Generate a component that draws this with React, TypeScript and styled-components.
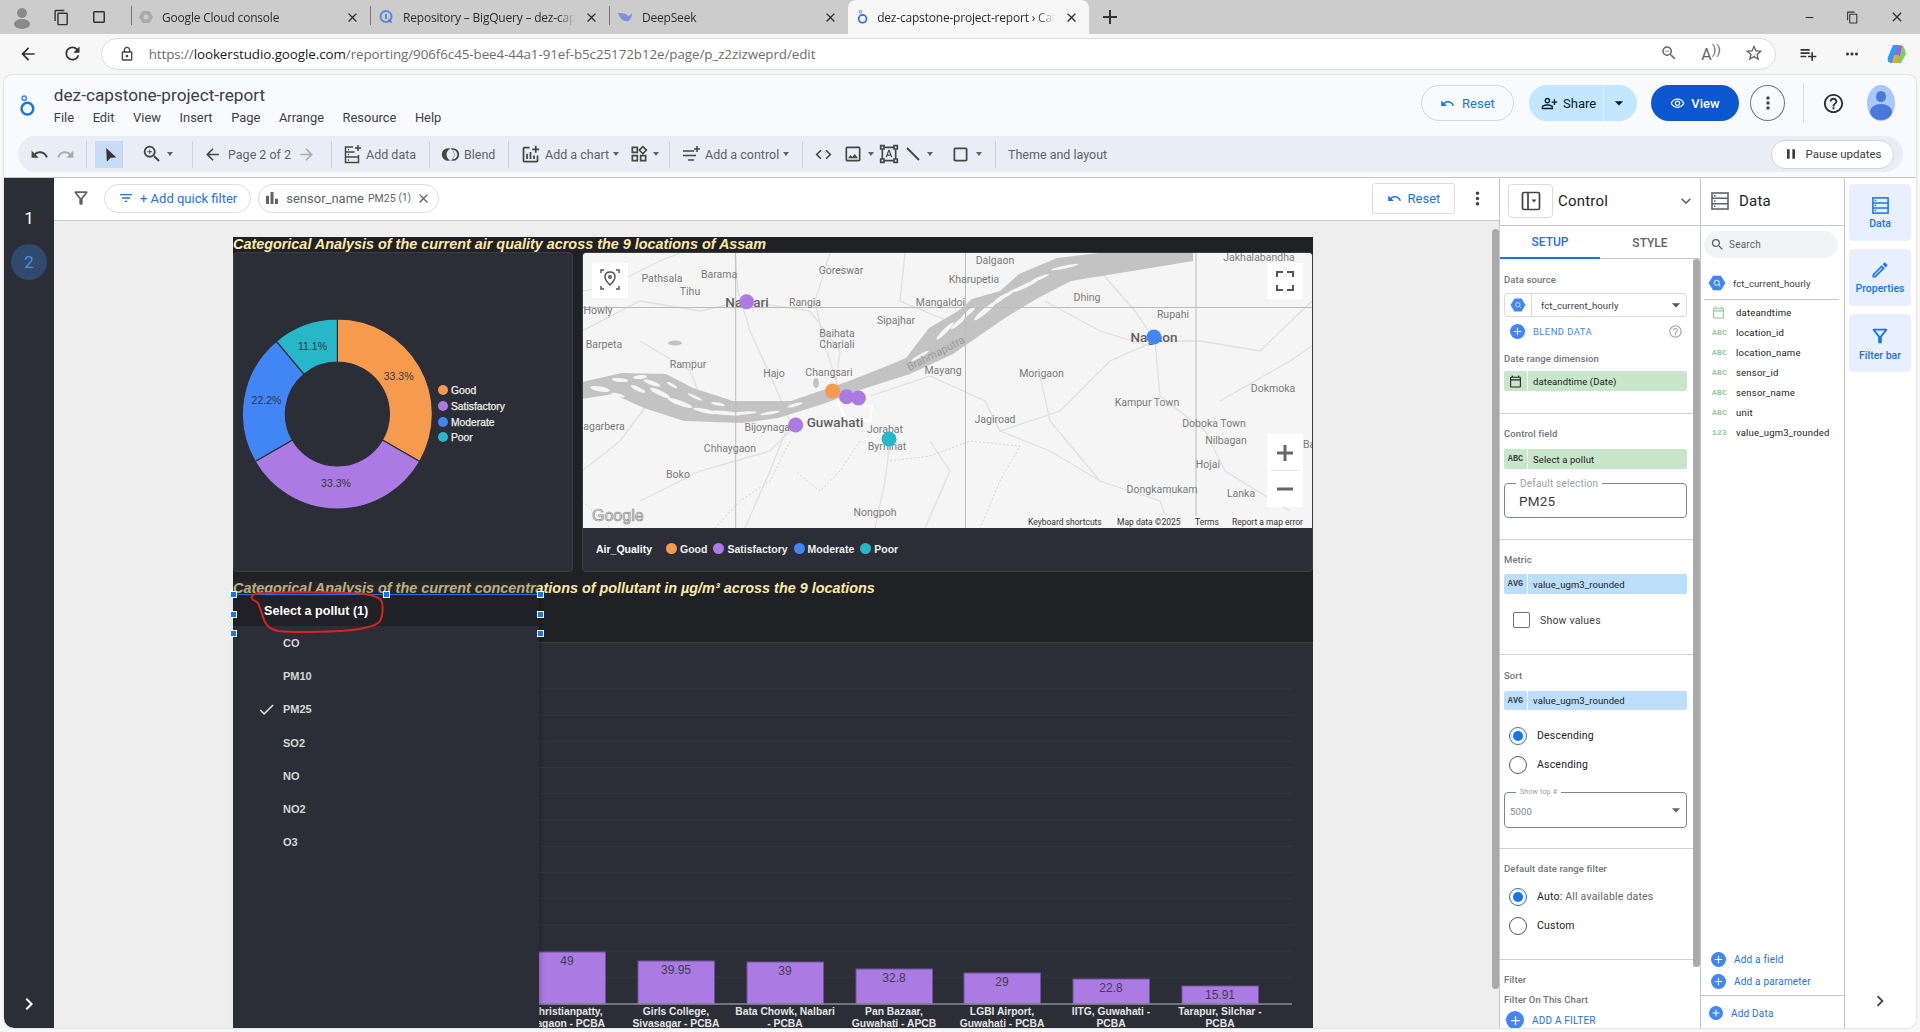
import React from "react";
import styled, { createGlobalStyle } from "styled-components";
import {
  MdUndo, MdRedo, MdNavigation, MdArrowBack, MdArrowForward, MdOutlineAddchart, MdCode, MdOutlineImage,
  MdMoreVert, MdHelpOutline, MdArrowDropDown, MdExpandMore, MdChevronRight, MdClose, MdCheck, MdSearch,
  MdOutlineEdit, MdPause, MdBarChart, MdOutlineFilterAlt, MdFilterList, MdOutlineVisibility, MdOutlinePersonAddAlt,
  MdAdd, MdRemove, MdOutlineCalendarToday, MdOutlineRefresh, MdOutlineZoomIn, MdOutlineHelpOutline,
  MdOutlineFormatShapes, MdOutlineWidgets, MdOutlineCropSquare, MdOutlineStarBorder, MdMoreHoriz, MdOutlineZoomOut,
  MdOutlineLock, MdOutlinePlaylistAdd, MdOutlineContentCopy,
} from "react-icons/md";

const Global = createGlobalStyle`
  html, body { margin: 0; padding: 0; width: 1920px; height: 1032px; overflow: hidden; background: #f7f7f7; }
  * { box-sizing: border-box; }
  body { font-family: Roboto, "Liberation Sans", sans-serif; }
`;

const Page = styled.div`
  width: 1920px; height: 1032px; display: flex; flex-direction: column; overflow: hidden; background: #f7f7f7;
`;

/* Browser chrome */
const TabStrip = styled.div`
  height: 34px; background: #cccccc; display: flex; align-items: stretch; flex: none;
`;
const StripTools = styled.div`
  width: 131px; display: flex; align-items: center; padding-left: 11px; gap: 20px; color: #333;
`;
const BrowserTab = styled.div<{ $active?: boolean }>`
  width: ${(p) => (p.$active ? 241 : 239)}px; display: flex; align-items: center; gap: 9px; padding: 0 10px 0 ${(p) => (p.$active ? 9 : 8)}px;
  font: 12px "Open Sans", Roboto, sans-serif; color: #2c2c2c; position: relative;
  background: ${(p) => (p.$active ? "#f7f7f7" : "transparent")};
  border-radius: ${(p) => (p.$active ? "8px 8px 0 0" : 0)};
  &::before { content: ""; display: ${(p) => (p.$active ? "none" : "block")}; position: absolute; left: 0; top: 6px; bottom: 9px; width: 1px; background: #777; }
`;
const TabTitle = styled.span`
  flex: 1; white-space: nowrap; overflow: hidden; letter-spacing: -0.2px;
  mask-image: linear-gradient(to right, #000 90%, transparent);
`;
const NewTab = styled.div`
  width: 40px; display: flex; align-items: center; justify-content: center; color: #333; margin-left: 1px;
`;
const WindowControls = styled.div`
  margin-left: auto; display: flex; align-items: center; gap: 30px; padding-right: 15px; color: #333;
`;
const AddressRow = styled.div`
  height: 39px; flex: none; background: #f7f7f7; display: flex; align-items: center; padding: 0 12px 0 18px; color: #333;
`;
const NavIcons = styled.div`
  display: flex; gap: 24px; width: 83px; align-items: center;
`;
const UrlBox = styled.div`
  width: 1683px; height: 32px; background: #fff; border: 1px solid #dcdcdc; border-radius: 16px; display: flex; align-items: center; padding: 0 11px 0 17px;
`;
const UrlText = styled.div`
  font: 13.4px "Open Sans", Roboto, sans-serif; color: #6d6d6d; margin-left: 14px; flex: 1; white-space: nowrap; letter-spacing: -0.08px;
  b { font-weight: 400; color: #1a1a1a; }
`;
const UrlIcons = styled.div`
  display: flex; gap: 23px; color: #666; align-items: center;
`;
const BrowserRight = styled.div`
  display: flex; align-items: center; gap: 25px; margin-left: 22px; color: #333;
`;

/* App header */
const AppShell = styled.div`
  flex: 1; min-height: 0; margin: 2px 4px 4px 4px; background: #f8fafd; border-radius: 8px 8px 10px 10px; display: flex; flex-direction: column; overflow: hidden;
  box-shadow: 0 0 2px rgba(0,0,0,.25);
`;
const Header = styled.div`
  height: 61px; flex: none; display: flex; align-items: center; padding: 0 0 0 15px;
`;
const TitleBlock = styled.div`
  margin-left: 18px; display: flex; flex-direction: column; gap: 3px; margin-top: -1px;
`;
const ReportTitle = styled.div`
  font-size: 17.2px; color: #3c4043; line-height: 22px;
`;
const MenuBar = styled.div`
  display: flex; gap: 18.6px; font-size: 12.9px; color: #3c4043; line-height: 18px;
`;
const HeaderActions = styled.div`
  margin-left: auto; display: flex; align-items: center; padding: 0 21px 5px 0;
`;
const PillButton = styled.div<{ $kind?: "outline" | "tonal" | "solid" }>`
  height: 36px; border-radius: 18px; display: flex; align-items: center; gap: 7px; font-size: 13px; font-weight: 500;
  background: ${(p) => (p.$kind === "tonal" ? "#c2e7ff" : p.$kind === "solid" ? "#0b57d0" : "transparent")};
  color: ${(p) => (p.$kind === "tonal" ? "#001d35" : p.$kind === "solid" ? "#fff" : "#1a73e8")};
  border: ${(p) => (p.$kind === "outline" ? "1px solid #d5d8dc" : "none")};
`;
const ResetPill = styled(PillButton)`
  width: 93px; justify-content: center; margin-right: 15px; font-weight: 400;
`;
const SharePill = styled(PillButton)`
  width: 108px; padding-left: 12px; margin-right: 14px; font-weight: 400; gap: 5px;
`;
const ShareDivider = styled.span`
  margin-left: 2px; width: 1px; height: 36px; background: #e2f3ff; display: block;
`;
const ViewPill = styled(PillButton)`
  width: 88px; justify-content: center; margin-right: 11px; gap: 6px;
`;
const RoundMore = styled.div`
  width: 35px; height: 36px; border-radius: 50%; border: 1px solid #777; display: flex; align-items: center; justify-content: center; color: #444;
`;
const VDivider = styled.div`
  width: 1px; height: 40px; background: #dadce0; margin: 0 18px 0 18px;
`;
const Avatar = styled.div`
  width: 28px; height: 36px; border-radius: 50%; background: #a8c7fa; margin-left: 22px; position: relative; overflow: hidden;
  &::before { content: ""; position: absolute; left: 9px; top: 6px; width: 10px; height: 11px; border-radius: 50%; background: #4a78d8; }
  &::after { content: ""; position: absolute; left: 3px; top: 19px; width: 22px; height: 16px; border-radius: 50%; background: #4a78d8; }
`;

/* Toolbar */
const Toolbar = styled.div`
  height: 36px; flex: none; margin: 0 13px 5px 14px; background: #e9eef6; border-radius: 18px; display: flex; align-items: center; padding-left: 8px; color: #444746;
  font-size: 12.5px;
`;
const ToolGroup = styled.div<{ $w: number; $gap?: number; $pl?: number; $bl?: boolean }>`
  width: ${(p) => p.$w}px; height: 27px; display: flex; align-items: center; flex: none; gap: ${(p) => p.$gap ?? 3}px; padding-left: ${(p) => p.$pl ?? 11}px;
  border-right: 1px solid #cfd4dc; border-left: ${(p) => (p.$bl ? "1px solid #cfd4dc" : "none")};
`;
const SelectTool = styled.div`
  width: 27px; height: 27px; background: #c9dcf7; display: flex; align-items: center; justify-content: center; color: #333; margin-left: 8px;
  svg { transform: rotate(-25deg); }
`;
const ToolLabel = styled.span`
  white-space: nowrap; color: #5f6368;
`;
const ToolGap = styled.span<{ $w: number }>`
  width: ${(p) => p.$w}px; flex: none;
`;
const ThemeLabel = styled(ToolLabel)`
  margin-left: 12px;
`;
const Caret = styled.span`
  display: inline-block; width: 0; height: 0; border-left: 3.5px solid transparent; border-right: 3.5px solid transparent; border-top: 4px solid #5f6368;
`;
const PauseBtn = styled.div`
  margin-left: auto; margin-right: 9px; width: 123px; height: 29px; background: #fff; border-radius: 15px; border: 1px solid #d0d4d9; display: flex; align-items: center; justify-content: center; gap: 6px; font-size: 11.5px; color: #3c4043;
`;

/* Body */
const Body = styled.div`
  flex: 1; min-height: 0; display: flex; border-top: 1px solid #c4c7c5; background: #fff;
`;
const PageRail = styled.div`
  width: 50px; flex: none; background: #2b2e36; display: flex; flex-direction: column; align-items: center; padding-top: 22px; color: #fff; font-size: 17px; gap: 8px;
`;
const PageNum = styled.div<{ $active?: boolean }>`
  width: 36px; height: 36px; border-radius: 50%; display: flex; align-items: center; justify-content: center;
  background: ${(p) => (p.$active ? "#2f4a6d" : "transparent")}; color: ${(p) => (p.$active ? "#4a90e2" : "#fff")};
`;
const RailExpand = styled.div`
  margin-top: auto; margin-bottom: 12px; color: #fff; display: flex;
`;
const Main = styled.div`
  width: 1445px; flex: none; display: flex; flex-direction: column; min-width: 0;
`;
const FilterBar = styled.div`
  height: 43px; flex: none; background: #fff; border-bottom: 1px solid #c4c7c5; display: flex; align-items: center; padding: 0 11px 2px 17px; color: #5f6368;
`;
const FilterPill = styled.div`
  height: 29px; border: 1px solid #dadce0; border-radius: 15px; display: flex; align-items: center; font-size: 13px; color: #1a73e8; gap: 6px; margin-left: 13px; padding: 0 13px;
`;
const SensorPill = styled(FilterPill)`
  margin-left: 7px; color: #5f6368; padding: 0 7px 0 4px; gap: 5px;
  small { font-size: 10.5px; margin-left: -1px; }
  sup { font-size: 10px; margin-left: -2px; vertical-align: 2px; line-height: 0; }
`;
const ResetSquare = styled.div`
  margin-left: auto; width: 83px; height: 31px; border: 1px solid #dadce0; border-radius: 3px; display: flex; align-items: center; justify-content: center; gap: 6px; font-size: 13px; color: #1a73e8; margin-right: 12px;
`;
const Canvas = styled.div`
  flex: 1; min-height: 0; background: #eeeeee; padding: 16px 0 0 179px; position: relative; overflow: hidden;
`;
const CanvasScroll = styled.div`
  position: absolute; right: 0; top: 8px; width: 7px; height: 760px; background: #aaa; border-radius: 4px;
`;
const Report = styled.div`
  width: 1080px; background: #202124; position: relative;
`;
const ReportHeading = styled.div<{ $tall?: boolean }>`
  font: italic bold 14.4px "Liberation Sans", Arial, sans-serif; color: #ffe9a8; line-height: ${(p) => (p.$tall ? "14px" : "15px")};
  white-space: nowrap; padding-top: ${(p) => (p.$tall ? "9px" : "0")};
  height: ${(p) => (p.$tall ? "70px" : "15px")};
`;
const TopRow = styled.div`
  display: flex; gap: 9px; height: 320px;
`;
const DarkCard = styled.div`
  background: #2b2e36; border: 1px solid #3a3d45; border-radius: 4px; overflow: hidden;
`;
const PieCard = styled(DarkCard)`
  width: 340px; flex: none;
`;
const MapCard = styled(DarkCard)`
  flex: 1; display: flex; flex-direction: column;
`;
const MapLegend = styled.div`
  flex: 1; display: flex; align-items: center; padding: 0 0 2px 13px; font: bold 10.5px "Liberation Sans", Arial, sans-serif; color: #eee;
`;
const LegendKey = styled.span`
  margin-right: 14px; color: #fff;
`;
const LegendItem = styled.span`
  display: flex; align-items: center; gap: 3px; margin-right: 6px;
`;
const LegendDot = styled.i<{ $c: string }>`
  width: 11px; height: 11px; border-radius: 50%; background: ${(p) => p.$c}; display: block;
`;
const ChartCard = styled.div`
  height: 386px; background: #2b2e36; border-top: 1px solid #3a3d45;
`;
const FullSvg = styled.svg`
  display: block; width: 100%;
`;
const Scrim = styled.div`
  position: absolute; left: 0; top: 344px; width: 306px; height: 13px; background: rgba(50, 50, 50, .32);
`;
const Dropdown = styled.div`
  position: absolute; left: 0; top: 357px; width: 306px; height: 434px; background: #2b2e36; box-shadow: 2px 0 4px rgba(0,0,0,.2); z-index: 2;
`;
const DropHead = styled.div`
  height: 32px; background: #1f2126; border-top: 1px solid #1a73e8; display: flex; align-items: center; padding-left: 31px;
  font: bold 12.6px "Liberation Sans", Arial, sans-serif; color: #fff;
`;
const DropItem = styled.div`
  height: 33.3px; padding-left: 50px; display: flex; align-items: center; position: relative; font: bold 11px "Liberation Sans", Arial, sans-serif; color: #d6d6d6;
  svg { position: absolute; left: 24px; top: 7px; color: #ddd; }
`;
const Handle = styled.span<{ $x: number; $y: number }>`
  position: absolute; left: ${(p) => p.$x - 3}px; top: ${(p) => p.$y - 3}px; width: 7px; height: 7px; background: #1a73e8; border: 1px solid #fff; z-index: 3;
`;
const RedMark = styled.svg`
  position: absolute; left: 14px; top: 354px; z-index: 4; overflow: visible;
`;

/* Panels */
const ControlPanel = styled.div`
  width: 201px; flex: none; border-left: 1px solid #c4c7c5; display: flex; flex-direction: column; background: #fff; min-height: 0;
`;
const DataPanel = styled.div`
  width: 144px; flex: none; border-left: 1px solid #c4c7c5; display: flex; flex-direction: column; background: #fff; min-height: 0;
`;
const PanelHead = styled.div`
  height: 48px; flex: none; border-bottom: 1px solid #c4c7c5; display: flex; align-items: center; font-size: 15px; color: #1f1f1f; letter-spacing: .2px; padding-bottom: 1px;
`;
const ToggleBox = styled.div`
  width: 45px; height: 34px; border: 1px solid #dadce0; border-radius: 4px; margin: 0 5px 0 8px; display: flex; align-items: center; justify-content: center; color: #444;
`;
const PanelChevron = styled.span`
  margin-left: auto; margin-right: 4px; display: flex; color: #666;
`;
const DataHeadIcon = styled.span`
  margin: 0 9px 0 9px; display: flex;
`;
const Tabs = styled.div`
  height: 33px; flex: none; display: flex; border-bottom: 1px solid #c4c7c5; font-size: 12px; font-weight: 500;
`;
const PanelTab = styled.div<{ $on?: boolean }>`
  flex: 1; display: flex; align-items: center; justify-content: center; color: ${(p) => (p.$on ? "#1a73e8" : "#5f6368")};
  border-bottom: ${(p) => (p.$on ? "2px solid #1a73e8" : "none")}; margin-bottom: -1px;
`;
const SettingsScroll = styled.div`
  flex: 1; min-height: 0; position: relative; overflow: hidden; padding-right: 7px;
  &::after { content: ""; position: absolute; right: 0; top: 0; width: 7px; height: 708px; background: #aaa; border-radius: 3px; }
`;
const Section = styled.div<{ $pb: number; $pt?: number; $last?: boolean }>`
  padding: ${(p) => p.$pt ?? 14}px 6px ${(p) => p.$pb}px 4px; border-bottom: ${(p) => (p.$last ? "none" : "1px solid #d0d2d4")};
`;
const FieldLabel = styled.div<{ $mt?: number; $mb?: number }>`
  font-size: 9.5px; font-weight: 500; color: #70757a; line-height: 12px; margin: ${(p) => p.$mt ?? 0}px 0 ${(p) => p.$mb ?? 9}px 0; letter-spacing: .1px;
`;
const SourceSelect = styled.div`
  height: 24px; border: 1px solid #dadce0; border-radius: 3px; display: flex; align-items: center; font-size: 9.5px; color: #3c4043;
`;
const SourceName = styled.span`
  flex: 1; padding-left: 9px; letter-spacing: .1px;
`;
const HexCell = styled.div`
  width: 27px; height: 22px; border-right: 1px solid #dadce0; display: flex; align-items: center; justify-content: center;
`;
const BlendRow = styled.div`
  height: 20px; margin-top: 4px; display: flex; align-items: center; padding-left: 6px; gap: 8px; font-size: 9.5px; color: #4285f4; letter-spacing: .4px;
  > svg { margin-left: auto; margin-right: 4px; color: #aaa; }
`;
const Chip = styled.div<{ $c: string; $h?: number }>`
  height: ${(p) => p.$h ?? 20}px; display: flex; gap: 1px; font-size: 9.5px; color: #202124; letter-spacing: .1px;
  > * { background: ${(p) => p.$c}; display: flex; align-items: center; }
  > *:first-child { width: 23px; justify-content: center; border-radius: 2px 0 0 2px; }
  > *:last-child { flex: 1; padding-left: 5px; border-radius: 0 2px 2px 0; }
`;
const TypeTag = styled.span<{ $green?: boolean }>`
  font: bold ${(p) => (p.$green ? 8 : 8.5)}px "Liberation Mono", monospace; color: ${(p) => (p.$green ? "#93c9a0" : "#3c4043")};
`;
const Outlined = styled.div<{ $h: number; $mt: number }>`
  margin-top: ${(p) => p.$mt}px; height: ${(p) => p.$h}px; border: 1px solid #80868b; border-radius: 4px; position: relative; display: flex; align-items: center;
`;
const OutlinedLegend = styled.span<{ $small?: boolean }>`
  position: absolute; left: 11px; top: ${(p) => (p.$small ? -5 : -6)}px; background: #fff; padding: 0 4px; font-size: ${(p) => (p.$small ? 7 : 10)}px; color: #9aa0a6; line-height: ${(p) => (p.$small ? 9 : 11)}px; letter-spacing: .2px;
`;
const OutlinedValue = styled.span<{ $small?: boolean }>`
  font-size: ${(p) => (p.$small ? 9.5 : 13.5)}px; color: ${(p) => (p.$small ? "#80868b" : "#3c4043")}; padding-left: ${(p) => (p.$small ? 5 : 14)}px; padding-top: ${(p) => (p.$small ? 2 : 0)}px; flex: 1; letter-spacing: .2px;
`;
const CheckRow = styled.div`
  height: 24px; margin-top: 14px; display: flex; align-items: center; gap: 10px; padding-left: 9px; font-size: 10.5px; color: #3c4043; letter-spacing: .2px;
  i { width: 17px; height: 16px; border: 1px solid #6f7378; border-radius: 2px; display: block; }
`;
const RadioRow = styled.div<{ $mt?: number }>`
  height: 29px; margin-top: ${(p) => p.$mt ?? 0}px; display: flex; align-items: center; gap: 10px; padding-left: 5px; font-size: 10.5px; color: #202124; letter-spacing: .2px;
  em { font-style: normal; color: #5f6368; }
`;
const RadioDot = styled.i<{ $on?: boolean }>`
  width: 18px; height: 18px; border-radius: 50%; display: block; border: 1px solid ${(p) => (p.$on ? "#1a73e8" : "#555")}; position: relative;
  &::after { content: ""; display: ${(p) => (p.$on ? "block" : "none")}; position: absolute; left: 3px; top: 3px; width: 10px; height: 10px; border-radius: 50%; background: #1a73e8; }
`;
const AddRow = styled.div`
  height: 22px; display: flex; align-items: center; gap: 8px; color: #1a73e8; font-size: 10px; padding-left: 2px; letter-spacing: .2px;
`;
const PlusDisc = styled.span<{ $s: number }>`
  width: ${(p) => p.$s}px; height: ${(p) => p.$s}px; border-radius: 50%; background: #4285f4; color: #fff; display: flex; align-items: center; justify-content: center; flex: none;
`;
const SearchPill = styled.div`
  margin: 5px 6px 0 3px; height: 27px; flex: none; background: #f1f3f4; border-radius: 14px; display: flex; align-items: center; gap: 4px; padding-left: 6px; color: #5f6368; font-size: 10px; letter-spacing: .2px;
`;
const SourceRow = styled.div`
  margin: 13px 5px 0 3px; height: 29px; flex: none; border-bottom: 1px solid #c4c7c5; display: flex; align-items: center; gap: 7px; padding: 0 0 4px 4px; font-size: 9.5px; color: #3c4043; letter-spacing: .1px;
`;
const FieldRow = styled.div<{ $mt?: number }>`
  height: 20px; flex: none; margin-top: ${(p) => p.$mt ?? 0}px; display: flex; align-items: center; padding-left: 11px; font-size: 9.5px; color: #202124; letter-spacing: .2px;
  > *:first-child { width: 24px; display: flex; }
`;
const DataFooter = styled.div`
  margin-top: auto; flex: none; display: flex; flex-direction: column;
`;
const FooterFields = styled.div`
  padding: 0 0 3px 8px; border-bottom: 1px solid #c4c7c5; display: flex; flex-direction: column;
`;
const FooterAdd = styled.div`
  padding: 6px 0 5px 6px; height: 32px;
`;
const SideRail = styled.div`
  flex: 1; border-left: 1px solid #c4c7c5; padding: 6px 5px 0 4px; display: flex; flex-direction: column; gap: 8px; background: #fff;
`;
const SideBtn = styled.div<{ $h: number }>`
  height: ${(p) => p.$h}px; background: #e8f0fe; border-radius: 4px; display: flex; flex-direction: column; align-items: center; justify-content: center; gap: 2px; color: #1a73e8; font-size: 10.5px; font-weight: 500;
`;
const SideChevron = styled.div`
  margin-top: auto; margin-bottom: 16px; display: flex; justify-content: center; color: #444; padding-right: 1px;
`;

const COLORS = { good: "#f69b4d", sat: "#ab7ae2", mod: "#4285f4", poor: "#27b7c9" };

const LookerLogo = ({ s = 20 }: { s?: number }) => (
  <svg width={s * 0.8} height={s * 1.1} viewBox="0 0 16 22" fill="none">
    <circle cx="5" cy="4" r="2" stroke="#4285f4" strokeWidth="1.4" />
    <circle cx="8" cy="14" r="5.6" stroke="#1a73e8" strokeWidth="2.4" />
  </svg>
);

const HexIcon = ({ s = 16 }: { s?: number }) => (
  <svg width={s} height={s} viewBox="0 0 16 16">
    <path d="M4.5 1.5h7L15.5 8l-4 6.5h-7L.5 8z" fill="#4285f4" />
    <circle cx="7.8" cy="7.8" r="2.2" fill="none" stroke="#cfe0fc" strokeWidth="1" />
    <path d="M9.3 9.3l1.6 1.6" stroke="#cfe0fc" />
  </svg>
);

const Copilot = () => (
  <svg width="22" height="22" viewBox="0 0 22 22">
    <path d="M7 2h7l-3 18H5C2 20 1 17 2 14z" fill="#2f9bf0" />
    <path d="M14 2c3 0 4 2 5 5l1 4-5 9H9l3-17z" fill="#7ccf5e" />
    <path d="M12 3h4l-2 10H9z" fill="#a55de0" />
    <path d="M6 20l2-8h5l-2 8z" fill="#f4a03c" />
  </svg>
);

const ResetIcon = ({ c = "#1a73e8" }: { c?: string }) => (
  <svg width="15" height="15" viewBox="0 0 24 24" fill={c}>
    <path d="M12.5 8c-2.65 0-5.05 1-6.9 2.6L2 7v9h9l-3.62-3.62c1.39-1.16 3.16-1.88 5.12-1.88 3.54 0 6.55 2.31 7.6 5.5l2.37-.78C21.08 11.03 17.15 8 12.5 8z" />
  </svg>
);

const BlendIcon = () => (
  <svg width="19" height="19" viewBox="0 0 24 24" fill="#444746">
    <path d="M9 4a8 8 0 100 16c1.100 0 2-.2 3-.6A8 8 0 0112 4.600 8 8 0 009 4z" />
    <path d="M15 4c-1 0-2 .2-3 .6a8 8 0 010 14.800c1 .4 1.900.6 3 .6a8 8 0 000-16zm0 14a6 6 0 01-.8 0 9.900 9.900 0 000-12 6 6 0 11.800 12z" />
  </svg>
);

const AddDataIcon = () => (
  <svg width="19" height="21" viewBox="0 0 19 21" fill="none" stroke="#444746" strokeWidth="1.5">
    <path d="M10 3H2.500v15.500h13V11" />
    <path d="M2.500 8h9M2.500 13h13" />
    <path d="M15 1v6M12 4h6" />
    <path d="M5 5.500h1M5 10.500h1M5 16h1" />
  </svg>
);

const ControlIcon = () => (
  <svg width="20" height="20" viewBox="0 0 20 20" fill="none" stroke="#444746" strokeWidth="1.5">
    <path d="M2 7h11M2 11.500h13M7 16h6" />
    <path d="M16 2v6M13 5h6" />
  </svg>
);

const PanelToggleIcon = () => (
  <svg width="20" height="20" viewBox="0 0 20 20" fill="none" stroke="#444" strokeWidth="1.700">
    <rect x="1.500" y="1.500" width="17" height="17" rx="1.500" />
    <path d="M7 1.500v17" />
    <path d="M10.500 8.500h5l-2.500 3z" fill="#444" stroke="none" />
  </svg>
);

const StorageIcon = ({ c = "#5f6368", s = 20 }: { c?: string; s?: number }) => (
  <svg width={s} height={s} viewBox="0 0 20 20" fill="none" stroke={c} strokeWidth="1.600">
    <rect x="2" y="2" width="16" height="16" />
    <path d="M2 7.300h16M2 12.700h16" />
    <path d="M4 4.700h1.500M4 10h1.500M4 15.300h1.500" />
  </svg>
);

const arc = (start: number, end: number, R: number, r: number, cx: number, cy: number) => {
  const pt = (a: number, rad: number) => [cx + rad * Math.sin(a), cy - rad * Math.cos(a)];
  const [x1, y1] = pt(start, R); const [x2, y2] = pt(end, R); const [x3, y3] = pt(end, r); const [x4, y4] = pt(start, r);
  const large = end - start > Math.PI ? 1 : 0;
  return `M${x1} ${y1}A${R} ${R} 0 ${large} 1 ${x2} ${y2}L${x3} ${y3}A${r} ${r} 0 ${large} 0 ${x4} ${y4}Z`;
};

const PIE = [
  { from: 0, to: 120, c: COLORS.good },
  { from: 120, to: 240, c: COLORS.sat },
  { from: 240, to: 320, c: COLORS.mod },
  { from: 320, to: 360, c: COLORS.poor },
];
const PIE_LABELS: [string, number, number][] = [["33.3%", 398.6, 379], ["33.3%", 336, 486], ["22.2%", 266.5, 403], ["11.1%", 312.5, 349]];
const PIE_LEGEND: [string, string, number][] = [["Good", COLORS.good, 389], ["Satisfactory", COLORS.sat, 405], ["Moderate", COLORS.mod, 421], ["Poor", COLORS.poor, 436]];

const PieChart = () => (
  <FullSvg viewBox="234 252 338 318" height="318">
    {PIE.map((s) => (
      <path key={s.from} d={arc((s.from * Math.PI) / 180, (s.to * Math.PI) / 180, 95, 52, 337.4, 413)} fill={s.c} stroke="#2b2e36" strokeWidth="1.2" />
    ))}
    {PIE_LABELS.map(([t, x, y]) => (
      <text key={t + x} x={x} y={y} textAnchor="middle" fontFamily="Liberation Sans" fontSize="10.5" fill="#33363e">{t}</text>
    ))}
    {PIE_LEGEND.map(([t, c, y]) => (
      <g key={t}>
        <circle cx="443" cy={y} r="5" fill={c} />
        <text x="451" y={y + 3.5} fontFamily="Liberation Sans" fontSize="10.300" fill="#f0f0f0" stroke="#f0f0f0" strokeWidth=".25">{t}</text>
      </g>
    ))}
  </FullSvg>
);

const MAP_LABELS: [string, number, number, number?, number?][] = [
  ["Dalgaon", 995, 259], ["Jakhalabandha", 1259, 256], ["Goreswar", 841, 269], ["Kharupetia", 974, 278], ["Pathsala", 662, 277],
  ["Barama", 719, 273], ["Tihu", 690, 290], ["Nalbari", 747, 302, 13.5, 500], ["Rangia", 805, 301], ["Mangaldoi", 940.5, 301],
  ["Dhing", 1087, 296], ["Rupahi", 1173, 313], ["Howly", 598, 309], ["Sipajhar", 896, 319], ["Baihata", 837, 332], ["Chariali", 837, 343],
  ["Nagaon", 1154, 337, 13.5, 500], ["Barpeta", 604, 343], ["Rampur", 688, 363], ["Hajo", 774, 372], ["Changsari", 829, 371],
  ["Mayang", 943, 369], ["Morigaon", 1041.5, 372], ["Dokmoka", 1273, 387], ["Kampur Town", 1147, 401], ["Jagiroad", 995, 418],
  ["Doboka Town", 1214, 422], ["agarbera", 604, 425], ["Bijoynagar", 769, 426], ["Guwahati", 835, 422, 13.5, 500], ["Jorabat", 885, 428],
  ["Byrnihat", 887, 445], ["Nilbagan", 1226, 439], ["Chhaygaon", 730, 447], ["Hojai", 1208, 463], ["Boko", 678, 473],
  ["Dongkamukam", 1162, 488], ["Lanka", 1241, 492], ["Nongpoh", 875, 511], ["Barpathar", 1326, 443],
];
const MAP_PINS: [number, number, string][] = [
  [746.6, 300.7, COLORS.sat], [832.5, 390, COLORS.good], [846.6, 395.7, COLORS.sat], [858.4, 397, COLORS.sat],
  [795.7, 424, COLORS.sat], [889, 438, COLORS.poor], [1154, 336, COLORS.mod],
];
const ROADS = [
  "M735 252 L738 290 L750 330 L775 385 L790 420 L770 470 L745 527",
  "M582 330 L640 300 L700 310 L745 300 L810 310 L840 350 L835 390",
  "M830 252 L815 300 L825 345 L838 385",
  "M870 395 L930 375 L985 400 L1000 430 L1060 410 L1110 360 L1155 340 L1200 340 L1260 350 L1312 300",
  "M1155 340 L1160 395 L1205 430 L1225 470 L1290 510",
  "M890 440 L885 480 L875 527",
  "M1000 430 L1050 450 L1100 480 L1160 500 L1170 527",
  "M796 424 L770 450 L700 470 L640 500",
  "M1045 300 L1100 330 L1150 345",
  "M1100 270 L1135 310 L1155 340",
  "M905 252 L900 300 L960 325",
  "M1040 375 L1050 420 L1100 480",
  "M582 290 L610 285 L660 260 L680 252",
  "M640 340 L690 370 L700 395",
  "M1220 400 L1290 360 L1312 345",
  "M582 470 L620 440 L650 400",
  "M930 440 L950 470 L925 527",
];
const BORDER = "M582 500 L610 527 M790 440 L770 480 L740 500 L715 527 M860 440 L840 470 L820 490 L795 470 M890 460 L930 455 L970 440 L1020 445 L1000 480 L980 527";
const ISLANDS: [number, number, number, number, number][] = [
  [600, 388, 10, 2.5, 10], [620, 379, 8, 2, 5], [618, 394, 7, 1.5, 15], [640, 376, 7, 2, -5], [652, 382, 9, 2, 20], [638, 388, 8, 2, 25],
  [660, 392, 11, 2.5, 25], [672, 384, 6, 1.5, 30], [680, 402, 13, 2.5, 20], [695, 396, 8, 1.5, 25], [705, 410, 12, 2, 12], [725, 412, 16, 2, 5], [718, 403, 7, 1.5, 10], [745, 412, 12, 1.5, -3],
  [770, 412, 10, 1.5, -10], [795, 404, 8, 1.5, -15],
  [945, 330, 12, 2.2, -45], [958, 322, 9, 2, -40], [968, 312, 10, 2, -40], [985, 310, 14, 2.5, -40], [1000, 298, 10, 2, -35], [1010, 292, 8, 1.5, -35], [1025, 285, 14, 2, -25], [1040, 277, 10, 1.5, -22], [1065, 266, 14, 1.5, -12], [920, 355, 10, 1.5, -30],
];

const MapView = () => (
  <FullSvg viewBox="583 252 729 275" height="275">
    <rect x="582" y="252" width="730" height="275" fill="#f5f5f5" />
    {ROADS.map((d) => <path key={d} d={d} fill="none" stroke="#e0e0e0" strokeWidth="1.300" />)}
    <path d={BORDER} fill="none" stroke="#d4d4d4" strokeDasharray="2 2" />
    <path
      d="M582 381L622 372L666 373L693 387L733 400L791 400L849 380L882 367L906 357L929 327L958 310L972 298L1000 290L1019 273L1057 257L1099 252L1193 252L1193 260L1132 270L1071 280L1038 297L1005 317L976 337L953 353L910 373L863 388L823 403L778 417L742 422L684 420L644 407L613 393L582 398Z"
      fill="#c3c3c3"
    />
    <g fill="#f5f5f5">
      {ISLANDS.map(([x, y, rx, ry, a]) => (
        <ellipse key={`${x}-${y}`} cx={x} cy={y} rx={rx} ry={ry} transform={`rotate(${a} ${x} ${y})`} />
      ))}
    </g>
    <ellipse cx="675" cy="342" rx="7" ry="2.500" fill="#c3c3c3" />
    <ellipse cx="816" cy="382" rx="3" ry="5" fill="#c3c3c3" />
    <path d="M838 402 L846 418 L870 420 L872 405 Z" fill="none" stroke="#fff" strokeWidth="2" />
    <g stroke="#bcbcbc" strokeWidth="1"><path d="M735.700 252V527M965.500 252V527M1196 252V527M582 306.500H1312" /></g>
    <text x="936" y="356" fontFamily="Roboto" fontSize="11" fill="#9b9b9b" textAnchor="middle" transform="rotate(-27 936 353)">Brahmaputra</text>
    {MAP_LABELS.map(([t, x, y, s, w]) => (
      <text key={t} x={x} y={y + 3.500} textAnchor="middle" fontFamily="Roboto" fontSize={s ?? 10.500} fontWeight={w ?? 400} fill={s ? "#5f5f5f" : "#7a7a7a"}>{t}</text>
    ))}
    {MAP_PINS.map(([x, y, c]) => <circle key={x} cx={x} cy={y} r="7.500" fill={c} />)}
    <text x="592" y="520" fontFamily="Liberation Sans" fontSize="16" fill="#e4e4e4" stroke="#8f8f8f" strokeWidth=".7">Google</text>
    <rect x="1023" y="515" width="289" height="12" fill="#f5f5f5" opacity=".8" />
    <g fontFamily="Roboto" fontSize="8.500" fill="#333">
      <text x="1028" y="524">Keyboard shortcuts</text>
      <text x="1117" y="524">Map data ©2025</text>
      <text x="1195" y="524">Terms</text>
      <text x="1232" y="524">Report a map error</text>
    </g>
    <rect x="592" y="262" width="36" height="35" fill="#fff" />
    <g fill="none" stroke="#555" strokeWidth="1.500">
      <path d="M610 271c-3 0-5 2-5 5 0 3 5 8 5 8s5-5 5-8c0-3-2-5-5-5z" />
      <circle cx="610" cy="276" r="1.300" />
      <path d="M601 272v-3h3M619 272v-3h-3M601 285v3h3M619 285v3h-3" />
    </g>
    <rect x="1267" y="262" width="36" height="36" fill="#fff" />
    <path d="M1277 276v-5h6M1293 276v-5h-6M1277 284v5h6M1293 284v5h-6" fill="none" stroke="#555" strokeWidth="2" />
    <rect x="1267" y="433" width="36" height="73" fill="#fff" />
    <path d="M1271 469.500h28" stroke="#e6e6e6" />
    <path d="M1285 444v16M1277 452h16M1277 488h16" stroke="#666" strokeWidth="3" />
  </FullSvg>
);

const BARS: [string, string, string, number, number][] = [
  ["Christianpatty,", "Nagaon - PCBA", "49", 529, 951],
  ["Girls College,", "Sivasagar - PCBA", "39.95", 638, 960],
  ["Bata Chowk, Nalbari", "- PCBA", "39", 747, 961],
  ["Pan Bazaar,", "Guwahati - APCB", "32.8", 856, 968],
  ["LGBI Airport,", "Guwahati - PCBA", "29", 964, 972],
  ["IITG, Guwahati -", "PCBA", "22.8", 1073, 978],
  ["Tarapur, Silchar -", "PCBA", "15.91", 1182, 985],
];

const BarChart = () => (
  <FullSvg viewBox="233 642 1080 386" height="386">
    {Array.from({ length: 12 }, (_, i) => 688 + i * 26.2).map((y) => (
      <path key={y} d={`M539 ${y}H1292`} stroke="#34373f" strokeWidth="1" />
    ))}
    {BARS.map(([a, b, v, x, top]) => (
      <g key={a}>
        <rect x={x} y={top} width="76.500" height={1003 - top} fill="#ab7ae2" stroke="#6f519b" strokeWidth="1" />
        <text x={x + 38} y={top + 13} textAnchor="middle" fontFamily="Liberation Sans" fontSize="12" fill="#3d4052">{v}</text>
        <g fontFamily="Liberation Sans" fontSize="10.300" fontWeight="700" fill="#e4e4e4" textAnchor="middle">
          <text x={x + 38} y="1014">{a}</text>
          <text x={x + 38} y="1026">{b}</text>
        </g>
      </g>
    ))}
    <path d="M539 1003H1292" stroke="#8a8c90" strokeWidth="1.500" />
  </FullSvg>
);

const ITEMS = ["CO", "PM10", "PM25", "SO2", "NO", "NO2", "O3"];
const HANDLES: [number, number][] = [[0, 357], [153, 357], [307, 357], [0, 377], [307, 377], [0, 396], [307, 396]];
const MENUS = ["File", "Edit", "View", "Insert", "Page", "Arrange", "Resource", "Help"];
const FIELDS = ["location_id", "location_name", "sensor_id", "sensor_name", "unit"];

export default function App() {
  return (
    <Page>
      <Global />
      <TabStrip>
        <StripTools>
          <svg width="22" height="24" viewBox="0 0 22 24"><circle cx="11" cy="8" r="5" fill="#8a8a8a" /><ellipse cx="11" cy="19" rx="8" ry="5" fill="#8a8a8a" /></svg>
          <MdOutlineContentCopy size={17} />
          <MdOutlineCropSquare size={18} />
        </StripTools>
        <BrowserTab>
          <svg width="14" height="14" viewBox="0 0 14 14"><path d="M3.500 1h7L14 7l-3.500 6h-7L0 7z" fill="#aaa" /><circle cx="7" cy="7" r="2.500" fill="#ccc" /></svg>
          <TabTitle>Google Cloud console</TabTitle><MdClose size={15} />
        </BrowserTab>
        <BrowserTab>
          <svg width="16" height="16" viewBox="0 0 16 16" fill="none"><circle cx="8" cy="7.500" r="5.500" stroke="#5b87dd" strokeWidth="2" /><path d="M8 5v5M10.500 10.500l3 3" stroke="#3b6cd0" strokeWidth="1.500" /></svg>
          <TabTitle>Repository – BigQuery – dez-capstone-proj</TabTitle><MdClose size={15} />
        </BrowserTab>
        <BrowserTab>
          <svg width="16" height="14" viewBox="0 0 16 14"><path d="M1 3c2 6 6 9 10 8 3-1 4-5 4-8-1 2-3 3-4 3-1-2-4-3-10-3z" fill="#7b94d8" /></svg>
          <TabTitle>DeepSeek</TabTitle><MdClose size={15} />
        </BrowserTab>
        <BrowserTab $active>
          <LookerLogo s={14} />
          <TabTitle>dez-capstone-project-report › Cat</TabTitle><MdClose size={15} />
        </BrowserTab>
        <NewTab><MdAdd size={24} /></NewTab>
        <WindowControls>
          <MdRemove size={13} />
          <MdOutlineContentCopy size={13} />
          <MdClose size={16} />
        </WindowControls>
      </TabStrip>
      <AddressRow>
        <NavIcons>
          <MdArrowBack size={20} />
          <MdOutlineRefresh size={21} />
        </NavIcons>
        <UrlBox>
          <MdOutlineLock size={16} color="#444" />
          <UrlText>https://<b>lookerstudio.google.com</b>/reporting/906f6c45-bee4-44a1-91ef-b5c25172b12e/page/p_z2zizweprd/edit</UrlText>
          <UrlIcons>
            <MdOutlineZoomOut size={18} />
            <ToolLabel>A<sup>))</sup></ToolLabel>
            <MdOutlineStarBorder size={20} />
          </UrlIcons>
        </UrlBox>
        <BrowserRight>
          <MdOutlinePlaylistAdd size={20} />
          <MdMoreHoriz size={18} />
          <Copilot />
        </BrowserRight>
      </AddressRow>
      <AppShell>
        <Header>
          <LookerLogo s={21} />
          <TitleBlock>
            <ReportTitle>dez-capstone-project-report</ReportTitle>
            <MenuBar>{MENUS.map((m) => <span key={m}>{m}</span>)}</MenuBar>
          </TitleBlock>
          <HeaderActions>
            <ResetPill $kind="outline"><ResetIcon />Reset</ResetPill>
            <SharePill $kind="tonal">
              <MdOutlinePersonAddAlt size={17} />Share<ShareDivider /><MdArrowDropDown size={20} />
            </SharePill>
            <ViewPill $kind="solid"><MdOutlineVisibility size={15} />View</ViewPill>
            <RoundMore><MdMoreVert size={20} /></RoundMore>
            <VDivider />
            <MdHelpOutline size={23} color="#333" />
            <Avatar />
          </HeaderActions>
        </Header>
        <Toolbar>
          <ToolGroup $w={61} $gap={7} $pl={4}><MdUndo size={19} /><MdRedo size={19} color="#aaa" /></ToolGroup>
          <SelectTool><MdNavigation size={16} /></SelectTool>
          <ToolGroup $w={71} $gap={4} $pl={18} $bl><MdOutlineZoomIn size={22} /><Caret /></ToolGroup>
          <ToolGroup $w={139} $gap={6} $pl={10}><MdArrowBack size={19} /><ToolLabel>Page 2 of 2</ToolLabel><MdArrowForward size={19} color="#aaa" /></ToolGroup>
          <ToolGroup $w={98} $gap={4}><AddDataIcon /><ToolLabel>Add data</ToolLabel></ToolGroup>
          <ToolGroup $w={79} $gap={4}><BlendIcon /><ToolLabel>Blend</ToolLabel></ToolGroup>
          <ToolGroup $w={161} $gap={4}>
            <MdOutlineAddchart size={21} /><ToolLabel>Add a chart</ToolLabel><Caret />
            <ToolGap $w={2} />
            <MdOutlineWidgets size={20} /><Caret />
          </ToolGroup>
          <ToolGroup $w={133} $gap={4}><ControlIcon /><ToolLabel>Add a control</ToolLabel><Caret /></ToolGroup>
          <ToolGroup $w={193} $gap={5} $pl={11}>
            <MdCode size={19} /><ToolGap $w={0} /><MdOutlineImage size={20} /><Caret />
            <MdOutlineFormatShapes size={20} />
            <svg width="18" height="18" viewBox="0 0 18 18"><path d="M3 3l12 12" stroke="#444746" strokeWidth="2" /></svg><Caret />
            <ToolGap $w={7} />
            <MdOutlineCropSquare size={21} /><Caret />
          </ToolGroup>
          <ThemeLabel>Theme and layout</ThemeLabel>
          <PauseBtn><MdPause size={16} />Pause updates</PauseBtn>
        </Toolbar>
        <Body>
          <PageRail>
            <PageNum>1</PageNum>
            <PageNum $active>2</PageNum>
            <RailExpand><MdChevronRight size={24} /></RailExpand>
          </PageRail>
          <Main>
            <FilterBar>
              <MdOutlineFilterAlt size={20} />
              <FilterPill><MdFilterList size={16} />+ Add quick filter</FilterPill>
              <SensorPill>
                <MdBarChart size={18} />sensor_name <small>PM25</small><sup>(1)</sup><MdClose size={15} />
              </SensorPill>
              <ResetSquare><ResetIcon />Reset</ResetSquare>
              <MdMoreVert size={21} color="#444" />
            </FilterBar>
            <Canvas>
              <Report>
                <ReportHeading>Categorical Analysis of the current air quality across the 9 locations of Assam</ReportHeading>
                <TopRow>
                  <PieCard><PieChart /></PieCard>
                  <MapCard>
                    <MapView />
                    <MapLegend>
                      <LegendKey>Air_Quality</LegendKey>
                      <LegendItem><LegendDot $c={COLORS.good} />Good</LegendItem>
                      <LegendItem><LegendDot $c={COLORS.sat} />Satisfactory</LegendItem>
                      <LegendItem><LegendDot $c={COLORS.mod} />Moderate</LegendItem>
                      <LegendItem><LegendDot $c={COLORS.poor} />Poor</LegendItem>
                    </MapLegend>
                  </MapCard>
                </TopRow>
                <ReportHeading $tall>Categorical Analysis of the current concentrations of pollutant in µg/m³ across the 9 locations</ReportHeading>
                <ChartCard><BarChart /></ChartCard>
                <Scrim />
                <Dropdown>
                  <DropHead>Select a pollut (1)</DropHead>
                  {ITEMS.map((t) => (
                    <DropItem key={t}>{t === "PM25" && <MdCheck size={19} />}{t}</DropItem>
                  ))}
                </Dropdown>
                {HANDLES.map(([x, y]) => <Handle key={`${x}-${y}`} $x={x} $y={y} />)}
                <RedMark width="140" height="46" viewBox="0 0 140 46" fill="none">
                  <path d="M5 7C3 4 8 2 20 2 40 1 70 1 100 2c14 0 27 2 33 6 4 4 3 17 0 22-3 5-20 9-40 10-20 1-46 2-62 0-8-2-10-4-13-9C15 24 13 16 11 12 9 9 5 10 5 7z" stroke="#d9231f" strokeWidth="2" />
                </RedMark>
              </Report>
              <CanvasScroll />
            </Canvas>
          </Main>
          <ControlPanel>
            <PanelHead>
              <ToggleBox><PanelToggleIcon /></ToggleBox>
              <span>Control</span>
              <PanelChevron><MdExpandMore size={20} /></PanelChevron>
            </PanelHead>
            <Tabs><PanelTab $on>SETUP</PanelTab><PanelTab>STYLE</PanelTab></Tabs>
            <SettingsScroll>
              <Section $pb={22} $pt={15}>
                <FieldLabel $mb={7}>Data source</FieldLabel>
                <SourceSelect>
                  <HexCell><HexIcon /></HexCell>
                  <SourceName>fct_current_hourly</SourceName>
                  <MdArrowDropDown size={20} color="#555" />
                </SourceSelect>
                <BlendRow>
                  <PlusDisc $s={15}><MdAdd size={13} /></PlusDisc>BLEND DATA
                  <MdOutlineHelpOutline size={15} />
                </BlendRow>
                <FieldLabel $mt={12} $mb={6}>Date range dimension</FieldLabel>
                <Chip $c="#c8e6c9"><span><MdOutlineCalendarToday size={13} /></span><span>dateandtime (Date)</span></Chip>
              </Section>
              <Section $pb={21}>
                <FieldLabel>Control field</FieldLabel>
                <Chip $c="#c8e6c9"><span><TypeTag>ABC</TypeTag></span><span>Select a pollut</span></Chip>
                <Outlined $h={35} $mt={14}>
                  <OutlinedLegend>Default selection</OutlinedLegend>
                  <OutlinedValue>PM25</OutlinedValue>
                </Outlined>
              </Section>
              <Section $pb={22}>
                <FieldLabel $mb={8}>Metric</FieldLabel>
                <Chip $c="#bbdefb"><span><TypeTag>AVG</TypeTag></span><span>value_ugm3_rounded</span></Chip>
                <CheckRow><i />Show values</CheckRow>
              </Section>
              <Section $pb={20} $pt={15}>
                <FieldLabel>Sort</FieldLabel>
                <Chip $c="#bbdefb" $h={19}><span><TypeTag>AVG</TypeTag></span><span>value_ugm3_rounded</span></Chip>
                <RadioRow $mt={11}><RadioDot $on />Descending</RadioRow>
                <RadioRow><RadioDot />Ascending</RadioRow>
                <Outlined $h={36} $mt={13}>
                  <OutlinedLegend $small>Show top #</OutlinedLegend>
                  <OutlinedValue $small>5000</OutlinedValue>
                  <MdArrowDropDown size={20} color="#666" />
                </Outlined>
              </Section>
              <Section $pb={19}>
                <FieldLabel $mb={7}>Default date range filter</FieldLabel>
                <RadioRow><RadioDot $on /><span>Auto: <em>All available dates</em></span></RadioRow>
                <RadioRow><RadioDot />Custom</RadioRow>
              </Section>
              <Section $pb={0} $last>
                <FieldLabel $mb={8}>Filter</FieldLabel>
                <FieldLabel $mb={3}>Filter On This Chart</FieldLabel>
                <AddRow><PlusDisc $s={18}><MdAdd size={15} /></PlusDisc>ADD A FILTER</AddRow>
              </Section>
            </SettingsScroll>
          </ControlPanel>
          <DataPanel>
            <PanelHead>
              <DataHeadIcon><StorageIcon /></DataHeadIcon>
              <span>Data</span>
            </PanelHead>
            <SearchPill><MdSearch size={15} />Search</SearchPill>
            <SourceRow><HexIcon s={18} />fct_current_hourly</SourceRow>
            <FieldRow $mt={2}><span><MdOutlineCalendarToday size={13} color="#8fc79a" /></span>dateandtime</FieldRow>
            {FIELDS.map((f) => (
              <FieldRow key={f}><span><TypeTag $green>ABC</TypeTag></span>{f}</FieldRow>
            ))}
            <FieldRow><span><TypeTag $green>123</TypeTag></span>value_ugm3_rounded</FieldRow>
            <DataFooter>
              <FooterFields>
                <AddRow><PlusDisc $s={15}><MdAdd size={13} /></PlusDisc>Add a field</AddRow>
                <AddRow><PlusDisc $s={15}><MdAdd size={13} /></PlusDisc>Add a parameter</AddRow>
              </FooterFields>
              <FooterAdd>
                <AddRow><PlusDisc $s={14}><MdAdd size={12} /></PlusDisc>Add Data</AddRow>
              </FooterAdd>
            </DataFooter>
          </DataPanel>
          <SideRail>
            <SideBtn $h={57}><StorageIcon c="#1a73e8" s={19} />Data</SideBtn>
            <SideBtn $h={57}><MdOutlineEdit size={20} />Properties</SideBtn>
            <SideBtn $h={58}><MdOutlineFilterAlt size={22} />Filter bar</SideBtn>
            <SideChevron><MdChevronRight size={22} /></SideChevron>
          </SideRail>
        </Body>
      </AppShell>
    </Page>
  );
}
